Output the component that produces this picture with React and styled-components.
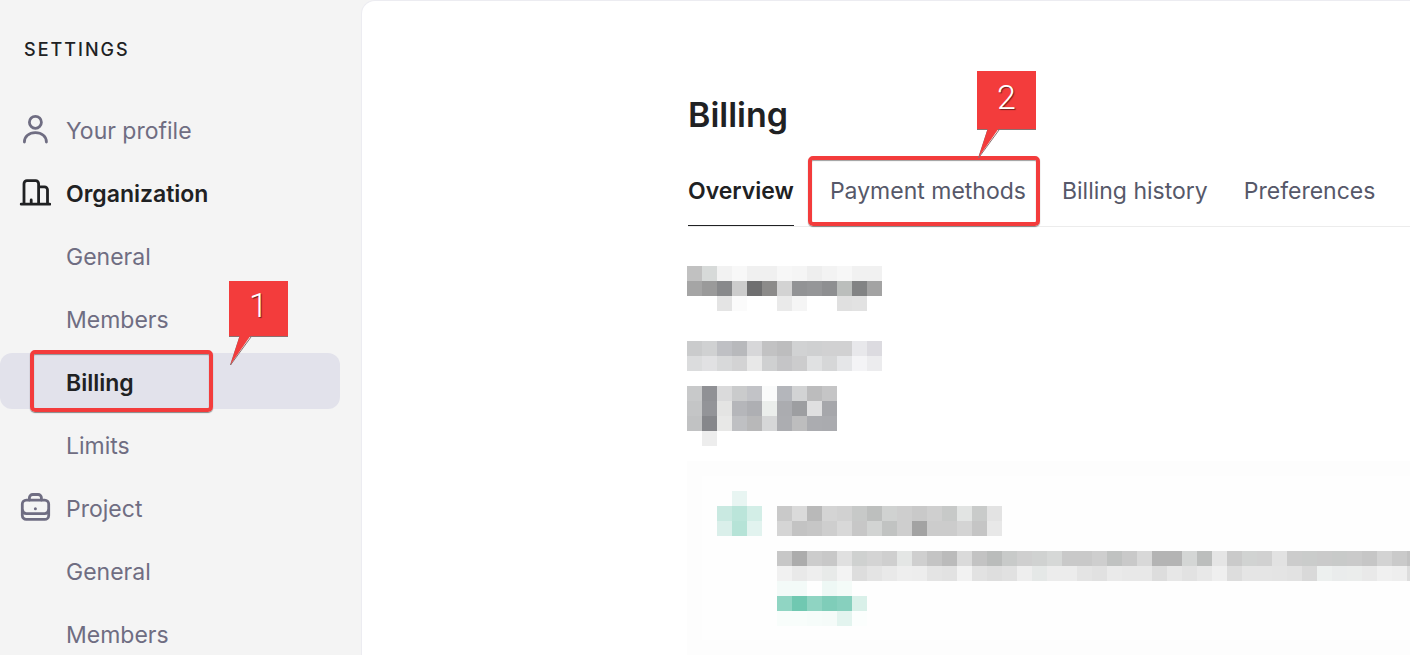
import React from "react";
import styled, { createGlobalStyle, css } from "styled-components";

const RED = "#f33c3c";

const GlobalStyle = createGlobalStyle`
  *, *::before, *::after { box-sizing: border-box; }
  body {
    margin: 0;
    background: #f4f4f4;
    color: #202123;
    font-family: Inter, "Liberation Sans", sans-serif;
  }
`;

const Shell = styled.div`
  display: flex;
  height: 100vh;
  overflow: hidden;
`;

const Sidebar = styled.aside`
  flex: none;
  width: 361px;
  padding: 38px 21px 0 0;
  overflow-y: auto;
  scrollbar-width: none;
`;

const SidebarHeading = styled.h2`
  margin: 0 0 39px;
  padding-left: 24px;
  font-size: 18px;
  line-height: 24px;
  font-weight: 500;
  letter-spacing: 2px;
  text-transform: uppercase;
`;

const NavList = styled.ul`
  display: flex;
  flex-direction: column;
  gap: 7px;
  margin: 0;
  padding: 0;
  list-style: none;
`;

const NavItem = styled.li`
  position: relative;
`;

const NavLink = styled.a`
  display: grid;
  grid-template-columns: 32px 1fr;
  column-gap: 15px;
  align-items: center;
  height: 56px;
  padding-left: 19px;
  border-radius: 12px;
  background: ${(p) => (p.$current ? "#e2e2eb" : "transparent")};
  color: ${(p) => (p.$strong ? "#202123" : "#6f6d82")};
  font-size: 23px;
  line-height: 32px;
  font-weight: ${(p) => (p.$strong ? 600 : 400)};
  text-decoration: none;
`;

const NavText = styled.span`
  grid-column: 2;
  padding-top: 3px;
`;

const NavIcon = styled.svg`
  width: 32px;
  height: 32px;
  fill: none;
  stroke: currentColor;
  stroke-width: 2.8;
  stroke-linecap: round;
  stroke-linejoin: round;
`;

const Panel = styled.main`
  flex: 1;
  min-width: 0;
  padding: 94px 0 0 325px;
  overflow: hidden;
  background: #fff;
  border: solid #ececf1;
  border-width: 1px 0 0 1px;
  border-top-left-radius: 14px;
`;

const PageHeader = styled.header`
  padding-left: 1px;
`;

const Title = styled.h1`
  margin: 0;
  font-size: 34px;
  line-height: 40px;
  font-weight: 600;
`;

const Tabs = styled.nav`
  display: flex;
  gap: 36px;
  margin-top: 20px;
  border-bottom: 1px solid #ececec;
`;

const TabItem = styled.div`
  position: relative;
  flex: none;
`;

const Tab = styled.a`
  display: block;
  height: 71px;
  padding-top: 20px;
  font-size: 23px;
  line-height: 32px;
  white-space: nowrap;
  text-decoration: none;
  color: #565869;
  ${(p) =>
    p.$current &&
    css`
      color: #202123;
      font-weight: 600;
      border-bottom: 1px solid #202123;
    `}
`;

const Highlight = styled.span`
  position: absolute;
  inset: ${(p) => p.$inset};
  width: ${(p) => p.$width};
  border: 4px solid ${RED};
  border-radius: 5px;
  box-shadow: 0 1px 1px rgba(60, 60, 60, 0.6), inset 0 1px 1px rgba(60, 60, 60, 0.5);
  pointer-events: none;
`;

const Marker = styled.span`
  position: absolute;
  left: ${(p) => p.$left}px;
  top: ${(p) => p.$top}px;
  width: 59px;
  height: ${(p) => p.$height}px;
  background: ${RED};
  box-shadow: 0 1px 0 #8a7070;
  color: #fff;
  font-family: Roboto, "Liberation Sans", sans-serif;
  font-weight: 300;
  font-size: 34px;
  line-height: ${(p) => p.$height - 6}px;
  text-align: center;
  text-shadow: 1px 1px 1px rgba(70, 20, 20, 0.75);
  pointer-events: none;
`;

const MarkerTail = styled.svg`
  position: absolute;
  left: 0;
  top: 100%;
  width: 24px;
  height: 30px;
`;

const Content = styled.section`
  display: flex;
  flex-direction: column;
  align-items: flex-start;
  padding-top: 39px;
`;

const MosaicSvg = styled.svg`
  display: block;
  flex: none;
  margin-top: ${(p) => p.$gap || 0}px;
`;

const Notice = styled.section`
  display: flex;
  align-items: flex-start;
  gap: 15px;
  align-self: stretch;
  height: 194px;
  margin-top: 15px;
  padding: 15px 0 0 15px;
  border: solid #fdfdfd;
  border-width: 15px 0 15px 15px;
  background: #fefefe;
`;

const NoticeText = styled.div`
  min-width: 0;
  padding-top: 15px;
`;

const CELL = 15;

/* Each row is a list of hex colours; "-" leaves a cell blank. */
function Mosaic({ rows, gap, label }) {
  const grid = rows.map((row) => row.split(" "));
  const width = Math.max(...grid.map((row) => row.length)) * CELL;
  const height = grid.length * CELL;
  return (
    <MosaicSvg
      $gap={gap}
      width={width}
      height={height}
      viewBox={`0 0 ${width} ${height}`}
      shapeRendering="crispEdges"
      role="img"
      aria-label={label}
    >
      {grid.map((row, y) =>
        row.map((color, x) =>
          color === "-" ? null : (
            <rect
              key={`${x}-${y}`}
              x={x * CELL}
              y={y * CELL}
              width={CELL}
              height={CELL}
              fill={`#${color}`}
            />
          )
        )
      )}
    </MosaicSvg>
  );
}

const PLAN = [
  "c1c1c1 d7dad9 f2f2f2 f8f8f8 f0f0f0 f0f0f0 f7f7f7 f5f5f5 eeeeee f3f3f3 f7f7f7 f1f1f1 f1f1f1",
  "a5a5a5 9a9a9a 88898b cccccc 6f6f70 8c8b8a d3d3d3 929395 959698 8e8f91 bbbebc 828384 a3a3a3",
  "- - e4e4e4 fbfbfb - - eaeaea f5f5f5 - - e0e0e0 e2e2e2 -",
];

const BALANCE_LABEL = [
  "cacbcc d0d1d2 bfc0c4 b8b9bc d7d7d9 c2c2c3 bdbdbe d1d2d3 cfd0d1 d1d1d2 d1d1d2 e8e8eb dcdbe0",
  "dbdcdd e1e1e3 d8d9da d3d3d4 e8e8e8 cfd0d1 c5c5c7 cccccd e0e1e2 d6d7d8 e5e6e8 f4f4f6 ececee",
];

const BALANCE = [
  "c8c9ca 909195 dadadb cacbcc c2c3c7 fafbfb b4b6bb d2d3d4 bcbcbd c5c5c6",
  "c4c5c6 939498 e4e4e3 b5b6ba aeafb3 ebeeec abacb0 9d9ea1 dfdfe0 a6a7ab",
  "c1c2c3 86878b e8e8e7 bfc0c3 b8b8b9 d6d7d8 acadb1 bdbdbe abacb0 aaabaf",
  "- ededed",
];

const BADGE = [
  "fefefe e8f5f2 -",
  "c9e9e1 bbe5da d3eee7",
  "daefea b6e3d7 e2f3ef",
];

const NOTICE_TITLE = [
  "c9c9c9 dadada b9b9b9 d4d4d4 d1d1d1 c7c9c8 bdbfbe d0d2d1 cecece c9c9c9 cfcfcf c7c9c8 e2e4e3 c9cbca e3e3e3",
  "d5d5d5 c3c3c3 c6c6c6 cecece d8d8d8 c7c7c7 d2d4d3 c1c3c2 cecece a3a3a3 cccccc cccccc d4d4d4 c5c5c5 e8e8e8",
];

const NOTICE_BODY = [
  "c7c7c7 acacac cccccc c8c8c8 e0e0e0 cfd1d0 d4d4d4 cfcfcf e4e6e5 cfcfcf c4c4c4 bbbbbb dadada c3c3c3 babcbb c8cac9 cfcfcf d0d2d1 d6d8d7 c9c9c9 c9c9c9 cecece c0c2c1 c9c9c9 d8d8d8 b4b4b4 b4b4b4 d4d6d5 bcbebd e5e5e5 cacaca d1d3d2 d1d1d1 e2e2e2 cccccc cacccb cacaca c8cac9 cacaca c6c6c6 d3d3d3 cacaca c2c2c2",
  "f1f1f1 e9e9e9 eeeeee e8eae9 f3f3f3 dddddd e4e4e4 e9e9e9 eeeeee ededed e4e4e4 e2e2e2 f2f2f2 e2e2e2 dedede e1e1e1 eeeeee e5e8e7 ececec ececec e4e4e4 e1e1e1 eaeaea e8e8e8 e8e8e8 dddddd e7e7e7 e2e2e2 e8e8e8 efefef dddddd e5e5e5 e5e5e5 e4e4e4 e2e2e2 d9d9d9 edf0ef eaecec ebedec e9e9e9 f0f0f0 eeeeee dddddd",
];

const NOTICE_LINK = [
  "f3faf8 f3faf8 - eef8f5 f4fbf8",
  "90d5c3 70c8b1 8fd4c2 7fcdb9 87d0be d9f0e9",
  "f8fdfb f8fdfb f6fcfa f5fbf9 e3f4ef fbfefd",
];

function ProfileIcon() {
  return (
    <NavIcon viewBox="0 0 32 32" aria-hidden="true">
      <circle cx="16.4" cy="9.3" r="6" />
      <path d="M5.4 29C5.4 23.5 10 19.7 16.4 19.7S27.4 23.5 27.4 29" />
    </NavIcon>
  );
}

function OrganizationIcon() {
  return (
    <NavIcon viewBox="0 0 32 32" aria-hidden="true">
      <path d="M2.2 28.2H30.8M5 28V7.7a3 3 0 0 1 3-3h8.6a3 3 0 0 1 3 3V28M19.6 10.8h5.9a3 3 0 0 1 3 3V28M12.2 24v4" />
    </NavIcon>
  );
}

function ProjectIcon() {
  return (
    <NavIcon viewBox="0 0 32 32" aria-hidden="true">
      <rect x="3.3" y="9.1" width="26.4" height="19.3" rx="4" />
      <path d="M10.4 9V6.8a3.3 3.3 0 0 1 3.3-3.3h5.4a3.3 3.3 0 0 1 3.3 3.3V9M3.5 19.3c.3 2 1.7 3.3 3.9 3.3h18.2c2.2 0 3.6-1.3 3.9-3.3" />
      <circle cx="16.4" cy="17.8" r="1.5" fill="currentColor" stroke="none" />
    </NavIcon>
  );
}

function Callout({ number, left, top, height }) {
  return (
    <Marker $left={left} $top={top} $height={height}>
      {number}
      <MarkerTail viewBox="0 0 24 30" aria-hidden="true">
        <path d="M11 0L1.5 29L22 1" stroke="#8a7070" strokeWidth="1" fill="none" />
        <path d="M11 -1H22L1.5 28.5Z" fill={RED} />
      </MarkerTail>
    </Marker>
  );
}

const NAV = [
  { text: "Your profile", Icon: ProfileIcon },
  { text: "Organization", Icon: OrganizationIcon, strong: true },
  { text: "General" },
  { text: "Members" },
  { text: "Billing", strong: true, current: true },
  { text: "Limits" },
  { text: "Project", Icon: ProjectIcon },
  { text: "General" },
  { text: "Members" },
];

const TABS = [
  { text: "Overview", current: true },
  { text: "Payment methods", marked: true },
  { text: "Billing history" },
  { text: "Preferences" },
];

export default function App() {
  return (
    <>
      <GlobalStyle />
      <Shell>
        <Sidebar>
          <SidebarHeading>Settings</SidebarHeading>
          <nav aria-label="Settings">
            <NavList>
              {NAV.map(({ text, Icon, strong, current }, i) => (
                <NavItem key={i}>
                  <NavLink
                    href="#"
                    $strong={strong}
                    $current={current}
                    aria-current={current ? "page" : undefined}
                  >
                    {Icon && <Icon />}
                    <NavText>{text}</NavText>
                  </NavLink>
                  {current && (
                    <>
                      <Highlight $inset="-3px auto -3px 30px" $width="183px" />
                      <Callout number="1" left={229} top={-72} height={55} />
                    </>
                  )}
                </NavItem>
              ))}
            </NavList>
          </nav>
        </Sidebar>

        <Panel>
          <PageHeader>
            <Title>Billing</Title>
            <Tabs aria-label="Billing sections">
              {TABS.map(({ text, current, marked }) => (
                <TabItem key={text}>
                  <Tab href="#" $current={current} aria-current={current ? "page" : undefined}>
                    {text}
                  </Tab>
                  {marked && (
                    <>
                      <Highlight $inset="1px -14px 0 -22px" $width="auto" />
                      <Callout number="2" left={147} top={-84} height={58} />
                    </>
                  )}
                </TabItem>
              ))}
            </Tabs>
          </PageHeader>

          <Content>
            <Mosaic rows={PLAN} label="Redacted plan" />
            <Mosaic rows={BALANCE_LABEL} gap={30} label="Redacted label" />
            <Mosaic rows={BALANCE} gap={15} label="Redacted amount" />
            <Notice>
              <Mosaic rows={BADGE} label="Redacted icon" />
              <NoticeText>
                <Mosaic rows={NOTICE_TITLE} label="Redacted heading" />
                <Mosaic rows={NOTICE_BODY} gap={15} label="Redacted text" />
                <Mosaic rows={NOTICE_LINK} label="Redacted link" />
              </NoticeText>
            </Notice>
          </Content>
        </Panel>
      </Shell>
    </>
  );
}
